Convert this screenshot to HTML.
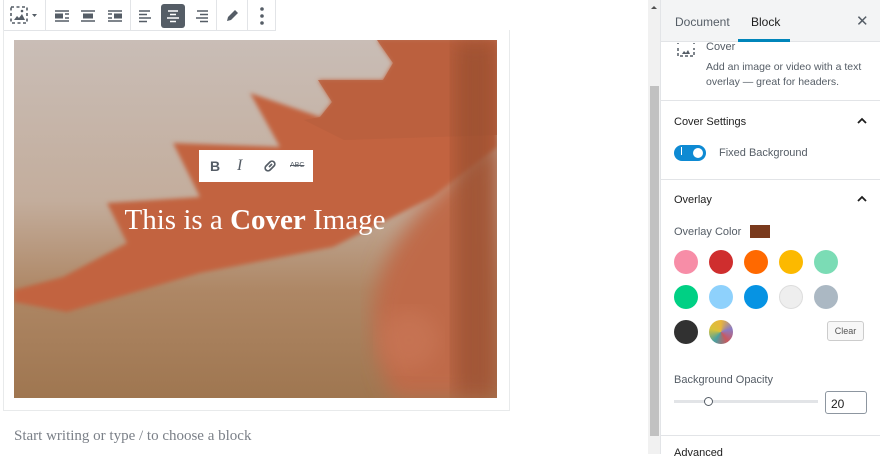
<!DOCTYPE html>
<html><head><meta charset="utf-8"><style>
*{box-sizing:border-box;margin:0;padding:0}
body{width:880px;height:454px;overflow:hidden;background:#fff;font-family:"Liberation Sans",sans-serif;position:relative;color:#1e1e1e}
.abs{position:absolute}
.tb{left:3px;top:0;width:273px;height:31px;border:1px solid #e2e4e7;border-top:none;background:#fff}
.sep{position:absolute;top:0;width:1px;height:30px;background:#e2e4e7}
.side{left:660px;top:0;width:220px;height:454px;background:#fff;border-left:1px solid #e2e4e7}
.sw{position:absolute;width:24px;height:24px;border-radius:50%}
.t13{font-size:12px;color:#555d66}
</style></head><body>
<div class="abs tb">
 <div class="sep" style="left:126px"></div><div class="sep" style="left:41px"></div><div class="sep" style="left:212px"></div><div class="sep" style="left:243px"></div>
 <svg class="abs" style="left:6px;top:6px" width="30" height="20" viewBox="0 0 30 20"><rect x="1" y="1" width="16" height="16" fill="none" stroke="#555d66" stroke-width="1.6" stroke-dasharray="3 2.5"/><path d="M4 14l3-4 2 2 3-4 3 6z" fill="#555d66"/><circle cx="12" cy="5" r="1.3" fill="#555d66"/><path d="M22 8l5 0-2.5 3z" fill="#555d66"/></svg>
 <svg class="abs" style="left:50px;top:8px" width="16" height="16"><path d="M1 3h14M1 13h14" stroke="#555d66" stroke-width="1.5"/><rect x="1" y="5.5" width="8" height="5" fill="#555d66"/><path d="M11 6h4M11 10h4" stroke="#555d66" stroke-width="1.5"/></svg>
 <svg class="abs" style="left:76px;top:8px" width="16" height="16"><path d="M1 3h14M1 13h14" stroke="#555d66" stroke-width="1.5"/><rect x="3" y="5.5" width="10" height="5" fill="#555d66"/></svg>
 <svg class="abs" style="left:103px;top:8px" width="16" height="16"><path d="M1 3h14M1 13h14" stroke="#555d66" stroke-width="1.5"/><rect x="7" y="5.5" width="8" height="5" fill="#555d66"/><path d="M1 6h4M1 10h4" stroke="#555d66" stroke-width="1.5"/></svg>
 <svg class="abs" style="left:134px;top:8px" width="16" height="16"><path d="M1 3h11M1 6.5h8M1 10h12M1 13.5h8" stroke="#555d66" stroke-width="1.5"/></svg>
 <div class="abs" style="left:157px;top:4px;width:24px;height:24px;background:#555d66;border-radius:3px"></div>
 <svg class="abs" style="left:161px;top:8px" width="16" height="16"><path d="M3 3h10M5 6.5h6M2 10h12M5 13.5h6" stroke="#fff" stroke-width="1.5"/></svg>
 <svg class="abs" style="left:189px;top:8px" width="16" height="16"><path d="M4 3h11M7 6.5h8M3 10h12M7 13.5h8" stroke="#555d66" stroke-width="1.5"/></svg>
 <svg class="abs" style="left:220px;top:8px" width="16" height="16"><path d="M3 13l1-4 7-7 3 3-7 7z" fill="#555d66"/></svg>
 <svg class="abs" style="left:250px;top:6px" width="16" height="20"><circle cx="8" cy="3" r="1.8" fill="#555d66"/><circle cx="8" cy="10" r="1.8" fill="#555d66"/><circle cx="8" cy="17" r="1.8" fill="#555d66"/></svg>
</div>
<div class="abs" style="left:3px;top:30px;width:507px;height:381px;border:1px solid #e8eaeb;border-top:none"></div>
<svg class="abs" style="left:14px;top:40px" width="483" height="358" viewBox="0 0 483 358">
 <defs>
  <linearGradient id="bg" x1="0" y1="0" x2="0" y2="1"><stop offset="0" stop-color="#c9bdb6"/><stop offset=".45" stop-color="#c3ad9c"/><stop offset=".7" stop-color="#ae8765"/><stop offset="1" stop-color="#9f7650"/></linearGradient>
  <filter id="bl"><feGaussianBlur stdDeviation="10"/></filter>
  <filter id="b2"><feGaussianBlur stdDeviation="2"/></filter>
 </defs>
 <rect width="483" height="358" fill="url(#bg)"/>
 <path d="M483 100 C420 150 370 200 360 260 C355 300 370 340 380 358 L483 358 Z" fill="#bf6a48" filter="url(#bl)"/>
 <path d="M363 0 L379 23 L369 40 L304 40 L318 62 L306 77 L236 53 L266 107 L159 103 L186 157 L93 163 L113 203 L49 237 L0 250 L0 262 L53 272 L186 233 L319 207 L419 157 L483 107 L483 0 Z" fill="#c2643f" filter="url(#b2)"/>
 <path d="M363 0 L379 23 L369 40 L304 40 L318 62 L306 77 L290 80 L330 100 L483 95 L483 0 Z" fill="#b95f3d" opacity=".8"/>
 <rect x="440" y="0" width="43" height="358" fill="#8e4a2c" opacity=".6" filter="url(#bl)"/>
 <circle cx="395" cy="300" r="30" fill="#d08060" opacity=".4" filter="url(#bl)"/>
 <text x="241" y="189" text-anchor="middle" font-family="Liberation Serif,serif" font-size="29" fill="#fff">This is a <tspan font-weight="bold">Cover</tspan> Image</text>
</svg>
<div class="abs" style="left:199px;top:150px;width:114px;height:32px;background:#fff"></div>
<div class="abs" style="left:210px;top:158px;font-weight:bold;font-size:14px;color:#555d66">B</div>
<div class="abs" style="left:237px;top:157px;font-style:italic;font-family:'Liberation Serif',serif;font-size:16px;color:#555d66">I</div>
<svg class="abs" style="left:262px;top:158px" width="16" height="16"><path d="M7 9l3-3M6 6L4 8a2.5 2.5 0 0 0 4 4l2-2M10 10l2-2a2.5 2.5 0 0 0-4-4L6 6" fill="none" stroke="#555d66" stroke-width="1.7"/></svg>
<div class="abs" style="left:290px;top:162px;font-size:7px;color:#555d66;text-decoration:line-through">ABC</div>
<div class="abs" style="left:14px;top:428px;font-family:'Liberation Serif',serif;font-size:15px;color:#7b8088">Start writing or type / to choose a block</div>
<div class="abs" style="left:648px;top:0;width:12px;height:454px;background:#f1f1f1"></div>
<div class="abs" style="left:650px;top:86px;width:9px;height:350px;background:#c1c1c1"></div>
<div class="abs" style="left:651px;top:6px;width:0;height:0;border-left:3px solid transparent;border-right:3px solid transparent;border-bottom:3px solid #505050"></div>
<div class="abs side">
 <div class="abs" style="left:0;top:0;width:220px;height:42px;background:#f3f4f5;border-bottom:1px solid #e2e4e7"></div>
 <div class="abs" style="left:14px;top:15px;font-size:12px;color:#555d66">Document</div>
 <div class="abs" style="left:90px;top:15px;font-size:12px;color:#1e1e1e">Block</div>
 <div class="abs" style="left:77px;top:39px;width:52px;height:3px;background:#0085ba"></div>
 <div class="abs" style="left:195px;top:12px;font-size:15px;color:#555d66">✕</div>
 <svg class="abs" style="left:16px;top:43px" width="18" height="14"><path d="M1 0v1M1 5v8h16V5M17 0v1M1 13" fill="none" stroke="#555d66" stroke-width="1.5" stroke-dasharray="3 2"/><path d="M5 11l2-3 2 2 2-3 2 4z" fill="#555d66"/></svg>
 <div class="abs" style="left:45px;top:41px;font-size:11px;color:#555d66">Cover</div>
 <div class="abs t13" style="left:45px;top:60px;font-size:10.5px;line-height:15px;width:162px">Add an image or video with a text overlay — great for headers.</div>
 <div class="abs" style="left:0;top:100px;width:220px;height:1px;background:#e2e4e7"></div>
 <div class="abs" style="left:13px;top:116px;font-size:11px;color:#1e1e1e">Cover Settings</div>
 <svg class="abs" style="left:196px;top:117px" width="10" height="8"><path d="M1 6l4-4 4 4" fill="none" stroke="#1e1e1e" stroke-width="1.8"/></svg>
 <div class="abs" style="left:13px;top:145px;width:32px;height:16px;border-radius:8px;background:#0e8ad3"></div>
 <div class="abs" style="left:32px;top:148px;width:10px;height:10px;border-radius:50%;background:#fff"></div>
 <div class="abs" style="left:20px;top:147px;width:1px;height:8px;background:#fff"></div>
 <div class="abs t13" style="left:58px;top:147px;font-size:11px">Fixed Background</div>
 <div class="abs" style="left:0;top:179px;width:220px;height:1px;background:#e2e4e7"></div>
 <div class="abs" style="left:13px;top:194px;font-size:11px;color:#1e1e1e">Overlay</div>
 <svg class="abs" style="left:196px;top:195px" width="10" height="8"><path d="M1 6l4-4 4 4" fill="none" stroke="#1e1e1e" stroke-width="1.8"/></svg>
 <div class="abs t13" style="left:13px;top:226px;font-size:11px">Overlay Color</div>
 <div class="abs" style="left:89px;top:225px;width:20px;height:13px;background:#7a3a1d"></div>
 <div class="sw" style="left:13px;top:250px;background:#f78da7"></div>
 <div class="sw" style="left:48px;top:250px;background:#cf2e2e"></div>
 <div class="sw" style="left:83px;top:250px;background:#ff6900"></div>
 <div class="sw" style="left:118px;top:250px;background:#fcb900"></div>
 <div class="sw" style="left:153px;top:250px;background:#7bdcb5"></div>
 <div class="sw" style="left:13px;top:285px;background:#00d084"></div>
 <div class="sw" style="left:48px;top:285px;background:#8ed1fc"></div>
 <div class="sw" style="left:83px;top:285px;background:#0693e3"></div>
 <div class="sw" style="left:118px;top:285px;background:#eeeeee;border:1px solid #ddd"></div>
 <div class="sw" style="left:153px;top:285px;background:#abb8c3"></div>
 <div class="sw" style="left:13px;top:320px;background:#313131"></div>
 <div class="sw" style="left:48px;top:320px;background:conic-gradient(#e8b53c,#8b7bc2,#c9585f,#4aa0a0,#d9c23a,#e8b53c)"></div>
 <div class="abs" style="left:166px;top:321px;width:37px;height:20px;border:1px solid #ccc;border-radius:3px;background:#f7f7f7;font-size:9px;color:#555;text-align:center;line-height:18px">Clear</div>
 <div class="abs t13" style="left:13px;top:374px;font-size:11px">Background Opacity</div>
 <div class="abs" style="left:13px;top:400px;width:144px;height:3px;background:#e2e4e7"></div>
 <div class="abs" style="left:43px;top:397px;width:9px;height:9px;border-radius:50%;background:#fff;border:1px solid #555d66"></div>
 <div class="abs" style="left:164px;top:391px;width:42px;height:23px;border:1px solid #8d96a0;border-radius:3px;font-size:12px;padding:5px 5px;color:#1e1e1e">20</div>
 <div class="abs" style="left:0;top:435px;width:220px;height:1px;background:#e2e4e7"></div>
 <div class="abs" style="left:13px;top:447px;font-size:11px;color:#1e1e1e">Advanced</div>
</div>
</body></html>
